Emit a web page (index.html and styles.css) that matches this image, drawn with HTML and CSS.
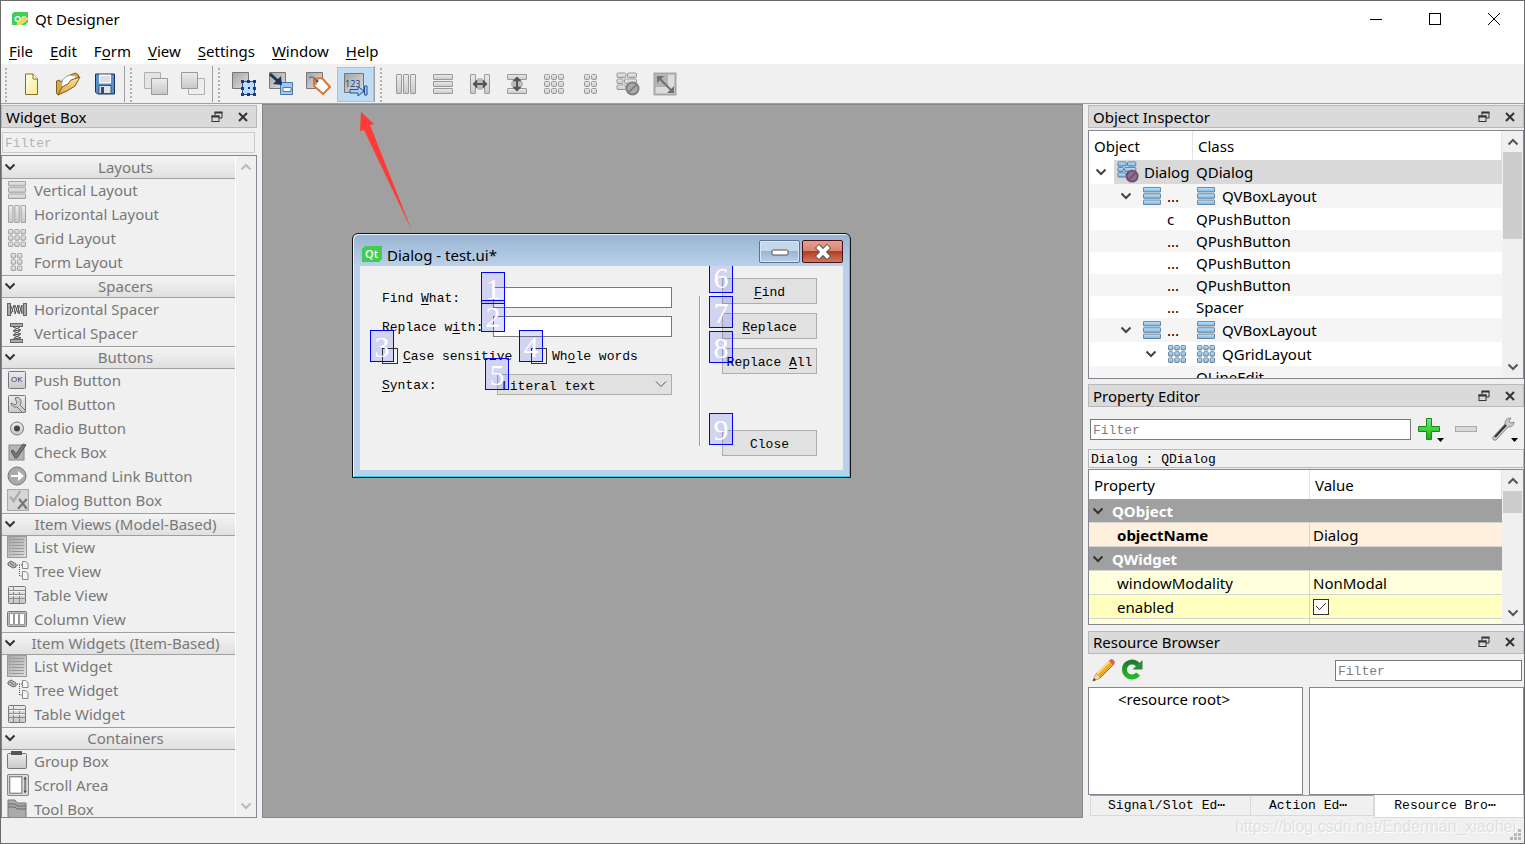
FILE: index.html
```html
<!DOCTYPE html>
<html lang="en">
<head>
  <meta charset="UTF-8" />
  <title>Qt Designer</title>
  <link rel="stylesheet" href="styles.css">
</head>
<body>
  <!-- icon sprite -->
  <svg class="sprite" width="0" height="0" aria-hidden="true">
    <defs>
      <linearGradient id="silver" x1="0" y1="0" x2="0" y2="1"><stop offset="0" stop-color="#ececec"/><stop offset="1" stop-color="#c8c8c8"/></linearGradient>
      <linearGradient id="steel" x1="0" y1="0" x2="1" y2="1"><stop offset="0" stop-color="#a4a4a4"/><stop offset="1" stop-color="#e0e0e0"/></linearGradient>
      <linearGradient id="blue" x1="0" y1="0" x2="0" y2="1"><stop offset="0" stop-color="#c4e6ff"/><stop offset="1" stop-color="#74b4e4"/></linearGradient>
      <linearGradient id="paper" x1="0" y1="0" x2="1" y2="1"><stop offset="0" stop-color="#fffff4"/><stop offset="1" stop-color="#f7ea8c"/></linearGradient>
      <linearGradient id="gold" x1="0" y1="0" x2="0" y2="1"><stop offset="0" stop-color="#fbe6a0"/><stop offset="1" stop-color="#d8a53c"/></linearGradient>
      <linearGradient id="green" x1="0" y1="0" x2="0" y2="1"><stop offset="0" stop-color="#7fe87a"/><stop offset="1" stop-color="#08b808"/></linearGradient>
      <linearGradient id="leaf" x1="0" y1="0" x2="0" y2="1"><stop offset="0" stop-color="#1f7a33"/><stop offset="1" stop-color="#22b822"/></linearGradient>
    </defs>
    <symbol id="vbox" viewBox="0 0 20 20"><rect x=".5" y=".5" width="19" height="5" rx=".5"/><rect x=".5" y="7.500" width="19" height="5" rx=".5"/><rect x=".5" y="14.500" width="19" height="5" rx=".5"/></symbol>
    <symbol id="hbox" viewBox="0 0 20 20"><rect x=".5" y=".5" width="5" height="19" rx=".5"/><rect x="7.500" y=".5" width="5" height="19" rx=".5"/><rect x="14.500" y=".5" width="5" height="19" rx=".5"/></symbol>
    <symbol id="grid" viewBox="0 0 20 20">
      <rect x=".5" y=".5" width="5" height="5" rx="1"/><rect x="7.500" y=".5" width="5" height="5" rx="1"/><rect x="14.500" y=".5" width="5" height="5" rx="1"/>
      <rect x=".5" y="7.500" width="5" height="5" rx="1"/><rect x="7.500" y="7.500" width="5" height="5" rx="1"/><rect x="14.500" y="7.500" width="5" height="5" rx="1"/>
      <rect x=".5" y="14.500" width="5" height="5" rx="1"/><rect x="7.500" y="14.500" width="5" height="5" rx="1"/><rect x="14.500" y="14.500" width="5" height="5" rx="1"/>
    </symbol>
    <symbol id="form" viewBox="0 0 20 20">
      <rect x="3.500" y=".5" width="5" height="5" rx="1"/><rect x="10.500" y=".5" width="5" height="5" rx="1"/>
      <rect x="3.500" y="7.500" width="5" height="5" rx="1"/><rect x="10.500" y="7.500" width="5" height="5" rx="1"/>
      <rect x="3.500" y="14.500" width="5" height="5" rx="1"/><rect x="10.500" y="14.500" width="5" height="5" rx="1"/>
    </symbol>
    <symbol id="hsplit" viewBox="0 0 20 20"><rect x=".5" y=".5" width="5" height="19" rx=".5"/><rect x="14.500" y=".5" width="5" height="19" rx=".5"/><path d="M9 4v12M11 4v12" stroke="#888"/><path d="M5 10h10" stroke="#555" stroke-width="2"/><path d="M2.500 10l5-5v10zM17.500 10l-5-5v10z" fill="#555" stroke="none"/></symbol>
    <symbol id="vsplit" viewBox="0 0 20 20"><rect x=".5" y=".5" width="19" height="5" rx=".5"/><rect x=".5" y="14.500" width="19" height="5" rx=".5"/><path d="M4 9h12M4 11h12" stroke="#888"/><path d="M10 5v10" stroke="#555" stroke-width="2"/><path d="M10 2.500l5 5H5zM10 17.500l5-5H5z" fill="#555" stroke="none"/></symbol>
    <symbol id="break" viewBox="0 0 24 24"><rect x="1" y="1" width="9" height="4.500" rx="1"/><rect x="11.500" y="1" width="9" height="4.500" rx="1"/><rect x="1" y="7" width="6" height="4.500" rx="1"/><rect x="8.500" y="7" width="12" height="4.500" rx="1"/><rect x="1" y="13" width="9" height="4.500" rx="1"/></symbol>
    <symbol id="chev" viewBox="0 0 12 12"><path d="M1.500 3.500L6 8l4.500-4.500" fill="none" stroke="currentColor" stroke-width="2"/></symbol>
    <symbol id="float" viewBox="0 0 12 12"><path d="M4 4V1.500h7v5.500H8" fill="none" stroke="#333"/><path d="M3.500 1.500h8" stroke="#333" stroke-width="2"/><rect x="1" y="5" width="7" height="5.500" fill="none" stroke="#333"/><path d="M.5 5.500h8" stroke="#333" stroke-width="2"/></symbol>
    <symbol id="close" viewBox="0 0 12 12"><path d="M2 2l8 8M10 2l-8 8" stroke="#333" stroke-width="2"/></symbol>
    <symbol id="hspacer" viewBox="0 0 20 20"><rect x=".5" y="4.500" width="3" height="12" fill="#aaa" stroke="#666"/><rect x="16.500" y="4.500" width="3" height="12" fill="#aaa" stroke="#666"/><path d="M4 15l3-9 1 9 3-9 1 9 3-9v9M4 7l2 6M8 6l3 8M12 6l3 8" fill="none" stroke="#555"/></symbol>
    <symbol id="vspacer" viewBox="0 0 20 20"><rect x="3.500" y=".5" width="12" height="3" fill="#aaa" stroke="#666"/><rect x="3.500" y="16.500" width="12" height="3" fill="#aaa" stroke="#666"/><path d="M6 4l8 3-8 1 8 3-8 1 8 3-8 1M13 4l-6 3M13 8l-6 3M13 12l-6 3" fill="none" stroke="#555"/></symbol>
    <symbol id="list" viewBox="0 0 20 22"><rect x=".5" y=".5" width="19" height="21" fill="url(#steel)" stroke="#999"/><path d="M2 3.500h2M2 6.500h2M2 9.500h2M2 12.500h2M2 15.500h2M2 18.500h2M5 3.500h12M5 6.500h12M5 9.500h12M5 12.500h12M5 15.500h12M5 18.500h12" stroke="#999"/></symbol>
    <symbol id="tree" viewBox="0 0 22 22"><path d="M1 3l3-2 5 3v3l-3 1-5-3zM3 3l4 3" fill="#bbb" stroke="#666"/><path d="M10 5h5M12.500 5v11h3" fill="none" stroke="#555" stroke-dasharray="1 1"/><path d="M15.500 1.500h3l2.500 2v5h-5.500zM15.500 11.500h3l2.500 2v6h-5.500z" fill="#f6f6f6" stroke="#888"/></symbol>
    <symbol id="table" viewBox="0 0 20 20"><rect x="1.500" y="1.500" width="17" height="17" rx="1" fill="url(#silver)" stroke="#777"/><path d="M1 5.500h18M1 9.500h18M1 13.500h18M6.500 1v17M12.500 5v13" stroke="#8a8a8a"/><path d="M2 6.500h16M2 10.500h16" stroke="#f4f4f4"/></symbol>
  </svg>

  <header class="title-bar">
    <svg class="app-icon" width="18" height="16" viewBox="0 0 18 16"><path d="M3 1h14v10l-3 3H1V3z" fill="#41cd52"/><text x="3" y="11" font-family="Open Sans, sans-serif" font-size="9" font-weight="bold" fill="#fff">Qt</text><path d="M7 11l7-6 3 3-7 6-4 1z" fill="#f0d848" stroke="#fff" stroke-width=".5"/></svg>
    <h1>Qt Designer</h1>
    <div class="window-buttons">
      <button aria-label="Minimize"><svg width="12" height="12"><path d="M0 6.500h12" stroke="#000"/></svg></button>
      <button aria-label="Maximize"><svg width="12" height="12"><rect x=".5" y=".5" width="11" height="11" fill="none" stroke="#000"/></svg></button>
      <button aria-label="Close"><svg width="12" height="12"><path d="M0 0l12 12M12 0L0 12" stroke="#000"/></svg></button>
    </div>
  </header>

  <nav class="menu-bar">
    <a href="#"><u>F</u>ile</a>
    <a href="#"><u>E</u>dit</a>
    <a href="#">F<u>o</u>rm</a>
    <a href="#"><u>V</u>iew</a>
    <a href="#"><u>S</u>ettings</a>
    <a href="#"><u>W</u>indow</a>
    <a href="#"><u>H</u>elp</a>
  </nav>

  <div class="toolbar">
    <div class="tool-group">
      <button aria-label="New"><svg width="26" height="26" viewBox="0 0 26 26"><path d="M7.500 3H15l4.500 5v15.500h-12z" fill="url(#paper)" stroke="#8a6d1c"/><path d="M15 3v5h4.500" fill="#fff" stroke="#8a6d1c"/></svg></button>
      <button aria-label="Open"><svg width="26" height="26" viewBox="0 0 26 26"><path d="M1.500 10l3-1 1 2 7-6 8-3 3 2v4L13 18 3 24l-1.500-2z" fill="#d9a93c" stroke="#7d5d14"/><path d="M6 15l2-7 6-4 7 1-1 6-9 5z" fill="#fff" stroke="#aaa"/><path d="M3 24l4-8 6-3 3-4 9-3-5 9-8 5z" fill="url(#gold)" stroke="#7d5d14"/></svg></button>
      <button aria-label="Save"><svg width="26" height="26" viewBox="0 0 26 26"><path d="M3.500 3h19v20H5.500l-2-2z" fill="#5a90c8" stroke="#1c3058"/><rect x="7" y="3.500" width="12" height="9" fill="#fafafa"/><path d="M8 6h10M8 8h10M8 10h10" stroke="#b8c4d0"/><rect x="7" y="14.500" width="12" height="8" fill="#dde4ea" stroke="#3a5276"/><rect x="9" y="16" width="3" height="6" fill="#2f4b76"/></svg></button>
    </div>
    <div class="tool-group">
      <button aria-label="Send to Back"><svg width="26" height="26" viewBox="0 0 26 26" fill="url(#silver)" stroke="#b0b0b0"><path d="M1.500 1.500h16v16h-16z" fill="#e4e4e4"/><path d="M8.500 7.500h16v16h-16z" stroke="#999"/></svg></button>
      <button aria-label="Bring to Front"><svg width="26" height="26" viewBox="0 0 26 26" fill="url(#silver)" stroke="#b0b0b0"><path d="M8.500 7.500h16v16h-16z" fill="#eee"/><path d="M1.500 1.500h16v16h-16z" stroke="#999"/></svg></button>
    </div>
    <div class="tool-group">
      <button aria-label="Edit Widgets"><svg width="26" height="26" viewBox="0 0 26 26"><path d="M1.500 1.500h16v16h-16z" fill="url(#steel)" stroke="#777"/><path d="M11.500 10.500h12v13h-12z" fill="#bcdcff" stroke="#2d4f86"/><path d="M10 9h3v3h-3zM16 9h3v3h-3zM22 9h3v3h-3zM10 16h3v3h-3zM22 16h3v3h-3zM10 22h3v3h-3zM16 22h3v3h-3zM22 22h3v3h-3zM17 16h2v2h-2z" fill="#1d3c70"/></svg></button>
      <button aria-label="Edit Signals/Slots"><svg width="26" height="26" viewBox="0 0 26 26"><path d="M1.500 1.500h16v16h-16z" fill="url(#steel)" stroke="#777"/><path d="M12.500 11.500h12v12h-12z" fill="#9ccaff" stroke="#50729c"/><path d="M15 16.500h8v4h-8z" fill="#fff" stroke="#527bb0"/><path d="M2 3l9 8" stroke="#1d3557" stroke-width="3"/><path d="M14 14l-1-9-8 8z" fill="#1d3557"/></svg></button>
      <button aria-label="Edit Buddies"><svg width="26" height="26" viewBox="0 0 26 26"><path d="M1.500 1.500h16v16h-16z" fill="url(#steel)" stroke="#777"/><path d="M9 8l8-1 8 9-7 7-9-8z" fill="#fff" stroke="#e07428" stroke-width="2"/><path d="M4 7q4-3 7 2v5" fill="none" stroke="#555"/><circle cx="12" cy="10" r="1.500" fill="#555"/></svg></button>
      <button class="checked" aria-label="Edit Tab Order"><svg width="26" height="26" viewBox="0 0 26 26"><path d="M2.500 2.500h19v19h-19z" fill="url(#steel)" stroke="#777"/><text x="3" y="16" font-family="Open Sans, sans-serif" font-size="9" fill="#0e3a94">123</text><path d="M8 18.500h8v-3l6 4.500-6 5v-3H8zM22.500 15h2.500v9h-2.500z" fill="#a8d0f4" stroke="#20508e"/></svg></button>
    </div>
    <div class="tool-group">
      <button disabled aria-label="Lay Out Horizontally"><svg width="20" height="20" fill="url(#silver)" stroke="#999"><use href="#hbox"/></svg></button>
      <button disabled aria-label="Lay Out Vertically"><svg width="20" height="20" fill="url(#silver)" stroke="#999"><use href="#vbox"/></svg></button>
      <button disabled aria-label="Lay Out Horizontally in Splitter"><svg width="20" height="20" fill="url(#silver)" stroke="#999"><use href="#hsplit"/></svg></button>
      <button disabled aria-label="Lay Out Vertically in Splitter"><svg width="20" height="20" fill="url(#silver)" stroke="#999"><use href="#vsplit"/></svg></button>
      <button disabled aria-label="Lay Out in a Grid"><svg width="20" height="20" fill="url(#silver)" stroke="#999"><use href="#grid"/></svg></button>
      <button disabled aria-label="Lay Out in a Form Layout"><svg width="20" height="20" fill="url(#silver)" stroke="#999"><use href="#form"/></svg></button>
      <button disabled aria-label="Break Layout"><svg width="24" height="24" viewBox="0 0 24 24" fill="url(#silver)" stroke="#999"><use href="#break"/><circle cx="16.500" cy="16.500" r="6" fill="#aaa" stroke="#808080" stroke-width="2"/><path d="M13 20l7-7" stroke="#808080" stroke-width="2"/></svg></button>
      <button disabled aria-label="Adjust Size"><svg width="24" height="24" viewBox="0 0 24 24"><path d="M1.500 1.500h21v21h-21z" fill="#dcdcdc" stroke="#a8a8a8" stroke-width="2"/><path d="M2 2h13v13H2z" fill="#b4b4b4"/><path d="M6 6l13 13" stroke="#707070" stroke-width="2"/><path d="M4 4h7l-7 7zM21 21h-7l7-7z" fill="#707070"/></svg></button>
    </div>
  </div>

  <main class="workspace">
    <aside class="dock widget-dock">
      <div class="dock-title">
        <h2>Widget Box</h2>
        <button aria-label="Float"><svg width="12" height="12"><use href="#float"/></svg></button>
        <button aria-label="Close"><svg width="12" height="12"><use href="#close"/></svg></button>
      </div>
      <input class="filter widget-filter" type="text" placeholder="Filter" aria-label="Filter widgets" disabled>
      <div class="view widget-box">
        <div class="widget-list">
          <h3><svg width="12" height="12"><use href="#chev"/></svg><span>Layouts</span></h3>
          <ul>
            <li><svg class="box" width="18" height="18" fill="url(#silver)" stroke="#999"><use href="#vbox"/></svg>Vertical Layout</li>
            <li><svg class="box" width="18" height="18" fill="url(#silver)" stroke="#999"><use href="#hbox"/></svg>Horizontal Layout</li>
            <li><svg class="box" width="18" height="18" fill="url(#silver)" stroke="#999"><use href="#grid"/></svg>Grid Layout</li>
            <li><svg class="box" width="18" height="18" fill="url(#silver)" stroke="#999"><use href="#form"/></svg>Form Layout</li>
          </ul>
          <h3><svg width="12" height="12"><use href="#chev"/></svg><span>Spacers</span></h3>
          <ul>
            <li><svg width="20" height="20"><use href="#hspacer"/></svg>Horizontal Spacer</li>
            <li><svg width="20" height="20"><use href="#vspacer"/></svg>Vertical Spacer</li>
          </ul>
          <h3><svg width="12" height="12"><use href="#chev"/></svg><span>Buttons</span></h3>
          <ul>
            <li><svg width="20" height="20"><rect x="1.500" y="1.500" width="17" height="17" rx="1" fill="url(#silver)" stroke="#777"/><text x="4" y="12" font-family="Open Sans, sans-serif" font-size="8" fill="#333">OK</text></svg>Push Button</li>
            <li><svg width="20" height="20"><rect x="1.500" y="1.500" width="17" height="17" rx="1" fill="url(#silver)" stroke="#777"/><path d="M8 4q5-2 6 3 0 3-1 4l6 6-3 2-6-6q-5 1-6-4l4 2 2-2z" fill="#ccc" stroke="#777"/></svg>Tool Button</li>
            <li><svg width="20" height="20"><circle cx="10" cy="10.500" r="6.500" fill="url(#silver)" stroke="#777"/><circle cx="10" cy="10.500" r="3" fill="#444"/></svg>Radio Button</li>
            <li><svg width="20" height="20"><rect x="2" y="3" width="15" height="15" fill="#b4b4b4" stroke="#888"/><path d="M4 9l2-1 3 4 7-10 3 1-9 13H8z" fill="#777" stroke="#555"/></svg>Check Box</li>
            <li><svg width="20" height="20"><circle cx="10" cy="10" r="9" fill="#aaa" stroke="#777"/><path d="M4 9h7V5l6 5-6 5v-4H4z" fill="#fff"/></svg>Command Link Button</li>
            <li><svg width="22" height="22" viewBox="0 0 20 20"><rect x=".5" y=".5" width="19" height="19" fill="#d6d6d6" stroke="#aaa"/><path d="M3 7l3 4 6-9" fill="none" stroke="#aaa" stroke-width="2"/><path d="M11 9l7 9M18 9l-8 9" stroke="#777" stroke-width="2"/></svg>Dialog Button Box</li>
          </ul>
          <h3><svg width="12" height="12"><use href="#chev"/></svg><span>Item Views (Model-Based)</span></h3>
          <ul>
            <li><svg width="20" height="22"><use href="#list"/></svg>List View</li>
            <li><svg width="22" height="22"><use href="#tree"/></svg>Tree View</li>
            <li><svg width="20" height="20"><use href="#table"/></svg>Table View</li>
            <li><svg width="20" height="20"><rect x=".5" y="2.500" width="19" height="15" rx="1" fill="#bbb" stroke="#777"/><path d="M2.500 4.500h4v11h-4zM7.500 4.500h4v11h-4zM12.500 4.500h5v11h-5z" fill="#fff" stroke="#999"/></svg>Column View</li>
          </ul>
          <h3><svg width="12" height="12"><use href="#chev"/></svg><span>Item Widgets (Item-Based)</span></h3>
          <ul>
            <li><svg width="20" height="22"><use href="#list"/></svg>List Widget</li>
            <li><svg width="22" height="22"><use href="#tree"/></svg>Tree Widget</li>
            <li><svg width="20" height="20"><use href="#table"/></svg>Table Widget</li>
          </ul>
          <h3><svg width="12" height="12"><use href="#chev"/></svg><span>Containers</span></h3>
          <ul>
            <li><svg width="20" height="20"><rect x=".5" y="2.500" width="19" height="15" rx="1" fill="url(#silver)" stroke="#777"/><path d="M4 0h11v4H4z" fill="#555"/></svg>Group Box</li>
            <li><svg width="22" height="22" viewBox="0 0 20 20"><rect x=".5" y=".5" width="19" height="19" rx="1" fill="#ddd" stroke="#888"/><rect x="2.500" y="2.500" width="11" height="15" fill="#fff" stroke="#777"/><path d="M16.500 5v10" stroke="#888" stroke-width="2"/><path d="M15 5l1.500-3L18 5zM15 15l1.500 3 1.500-3z" fill="#444"/></svg>Scroll Area</li>
            <li><svg width="20" height="20"><path d="M1 1h7l2 3h9v16H1z" fill="#aaa" stroke="#777"/><path d="M1 5h7l2 2h9M1 8h7l2 2h9" fill="none" stroke="#666"/></svg>Tool Box</li>
          </ul>
        </div>
        <div class="scrollbar off">
          <svg class="up" width="12" height="12"><use href="#chev"/></svg>
          <svg width="12" height="12"><use href="#chev"/></svg>
        </div>
      </div>
    </aside>

    <section class="mdi">
      <div class="dialog">
        <div class="dialog-title">
          <svg width="20" height="16"><path d="M3 0h17v13l-3 3H0V3z" fill="#41cd52"/><text x="3" y="12" font-family="Open Sans, sans-serif" font-size="11" font-weight="600" fill="#fff">Qt</text></svg>
          <span>Dialog - test.ui*</span>
          <button class="min" aria-label="Minimize"><svg width="18" height="8"><rect x="1" y="2" width="16" height="5" rx="1" fill="#fff" stroke="#555"/></svg></button>
          <button class="shut" aria-label="Close"><svg width="18" height="16"><path d="M3 2l12 12M15 2L3 14" stroke="#555" stroke-width="6"/><path d="M3.500 2.500l11 11M14.500 2.500l-11 11" stroke="#fff" stroke-width="4"/></svg></button>
        </div>
        <form class="dialog-body">
          <div class="find-form">
            <div class="row"><label for="find">Find <u>W</u>hat:</label><input type="text" id="find"></div>
            <div class="row"><label for="replace">Replace w<u>i</u>th:</label><input type="text" id="replace"></div>
            <div class="checks">
              <label><input type="checkbox"> <span><u>C</u>ase sensitive</span></label>
              <label><input type="checkbox"> <span>Wh<u>o</u>le words</span></label>
            </div>
            <div class="row syntax">
              <label for="syntax"><u>S</u>yntax:</label>
              <div class="combo">
                <select id="syntax"><option>Literal text</option></select>
                <svg width="12" height="12"><path d="M1 3.500l5 5 5-5" fill="none" stroke="#555"/></svg>
              </div>
            </div>
          </div>
          <div class="divider"></div>
          <div class="form-buttons">
            <button type="button"><u>F</u>ind</button>
            <button type="button"><u>R</u>eplace</button>
            <button type="button">Replace <u>A</u>ll</button>
            <button type="button" class="last">Close</button>
          </div>
          <!-- tab order indicators -->
          <span class="tab-order t1">1</span>
          <span class="tab-order t2">2</span>
          <span class="tab-order t3">3</span>
          <span class="tab-order t4">4</span>
          <span class="tab-order t5">5</span>
          <span class="tab-order t6">6</span>
          <span class="tab-order t7">7</span>
          <span class="tab-order t8">8</span>
          <span class="tab-order t9">9</span>
        </form>
      </div>
      <svg class="pointer" width="54" height="120"><path d="M2 0l13 12-4 1 42 106L5 18l-4 1z" fill="#ff3b38"/></svg>
    </section>

    <aside class="dock right-docks">
      <section class="panel">
        <div class="dock-title">
          <h2>Object Inspector</h2>
          <button aria-label="Float"><svg width="12" height="12"><use href="#float"/></svg></button>
          <button aria-label="Close"><svg width="12" height="12"><use href="#close"/></svg></button>
        </div>
        <div class="view inspector">
          <div class="table-wrap">
            <table class="object-tree">
              <thead><tr><th>Object</th><th>Class</th></tr></thead>
              <tbody>
                <tr class="tall selected"><td><div><i><svg width="12" height="12"><use href="#chev"/></svg></i><b><svg width="22" height="22" viewBox="0 0 24 24" fill="url(#blue)" stroke="#4c78a4"><use href="#break"/><circle cx="16.500" cy="16.500" r="6" fill="#6f7ca0" stroke="#744c68" stroke-width="2"/><path d="M13 20l7-7" stroke="#a04058" stroke-width="2"/></svg>Dialog</b></div></td><td>QDialog</td></tr>
                <tr class="tall"><td><div class="l1"><i><svg width="12" height="12"><use href="#chev"/></svg></i><b><svg class="box" width="18" height="18" fill="url(#blue)" stroke="#60788f"><use href="#vbox"/></svg>...</b></div></td><td><div><svg class="box" width="18" height="18" fill="url(#blue)" stroke="#60788f"><use href="#vbox"/></svg>QVBoxLayout</div></td></tr>
                <tr><td><div class="l3">c</div></td><td>QPushButton</td></tr>
                <tr><td><div class="l3">...</div></td><td>QPushButton</td></tr>
                <tr><td><div class="l3">...</div></td><td>QPushButton</td></tr>
                <tr><td><div class="l3">...</div></td><td>QPushButton</td></tr>
                <tr><td><div class="l3">...</div></td><td>Spacer</td></tr>
                <tr class="tall"><td><div class="l1"><i><svg width="12" height="12"><use href="#chev"/></svg></i><b><svg class="box" width="18" height="18" fill="url(#blue)" stroke="#60788f"><use href="#vbox"/></svg>...</b></div></td><td><div><svg class="box" width="18" height="18" fill="url(#blue)" stroke="#60788f"><use href="#vbox"/></svg>QVBoxLayout</div></td></tr>
                <tr class="tall"><td><div class="l2"><i><svg width="12" height="12"><use href="#chev"/></svg></i><b><svg class="box" width="18" height="18" fill="url(#blue)" stroke="#60788f"><use href="#grid"/></svg></b></div></td><td><div><svg class="box" width="18" height="18" fill="url(#blue)" stroke="#60788f"><use href="#grid"/></svg>QGridLayout</div></td></tr>
                <tr><td></td><td>QLineEdit</td></tr>
              </tbody>
            </table>
          </div>
          <div class="scrollbar">
            <svg class="up" width="12" height="12"><use href="#chev"/></svg>
            <div class="thumb"></div>
            <svg width="12" height="12"><use href="#chev"/></svg>
          </div>
        </div>
      </section>

      <section class="panel">
        <div class="dock-title">
          <h2>Property Editor</h2>
          <button aria-label="Float"><svg width="12" height="12"><use href="#float"/></svg></button>
          <button aria-label="Close"><svg width="12" height="12"><use href="#close"/></svg></button>
        </div>
        <div class="prop-tools">
          <input class="filter" type="text" placeholder="Filter" aria-label="Filter properties">
          <button aria-label="Add"><svg width="28" height="28"><path d="M9.500 3.500h5v8h8v5h-8v8h-5v-8h-8v-5h8z" fill="url(#green)" stroke="#14881c"/><path d="M20 23h7l-3.500 4z"/></svg></button>
          <button aria-label="Remove" disabled><svg width="28" height="28"><rect x="1.500" y="11.500" width="21" height="5" fill="#d8d8d8" stroke="#aaa"/></svg></button>
          <button aria-label="Configure"><svg width="28" height="28"><path d="M1.500 22.500L14 9q0-6 6-6l-2 3 2 2 3-1q0 5-6 5L5 25q-3 1-3.500-2.500z" fill="#ccc" stroke="#888"/><path d="M4 22L15 10" stroke="#333" stroke-width="2"/><path d="M20 23h7l-3.500 4z"/></svg></button>
        </div>
        <div class="object-label">Dialog : QDialog</div>
        <div class="view properties">
          <div class="table-wrap">
            <table class="prop-table">
              <thead><tr><th>Property</th><th>Value</th></tr></thead>
              <tbody>
                <tr class="group"><td colspan="2"><svg width="12" height="12"><use href="#chev"/></svg>QObject</td></tr>
                <tr class="name"><td>objectName</td><td>Dialog</td></tr>
                <tr class="group"><td colspan="2"><svg width="12" height="12"><use href="#chev"/></svg>QWidget</td></tr>
                <tr class="light"><td>windowModality</td><td>NonModal</td></tr>
                <tr class="deep"><td><label for="enabled">enabled</label></td><td><input type="checkbox" id="enabled" checked></td></tr>
                <tr class="light"><td></td><td></td></tr>
              </tbody>
            </table>
          </div>
          <div class="scrollbar">
            <svg class="up" width="12" height="12"><use href="#chev"/></svg>
            <div class="thumb"></div>
            <svg width="12" height="12"><use href="#chev"/></svg>
          </div>
        </div>
      </section>

      <section class="panel">
        <div class="dock-title">
          <h2>Resource Browser</h2>
          <button aria-label="Float"><svg width="12" height="12"><use href="#float"/></svg></button>
          <button aria-label="Close"><svg width="12" height="12"><use href="#close"/></svg></button>
        </div>
        <div class="resource-tools">
          <button aria-label="Edit Resources"><svg width="24" height="24"><path d="M1 23l3-7L18 2l4 4L8 20z" fill="#f0a828" stroke="#a86c14"/><path d="M5 16L18 3" stroke="#ffdc80" stroke-width="2"/><path d="M1 23l3-7 4 4z" fill="#f4dcb0"/><path d="M1 23l1-3 2 2z" fill="#333"/><path d="M17 3l2-2q3 0 4 4l-2 2z" fill="#d46848"/></svg></button>
          <button aria-label="Reload"><svg width="24" height="24"><path d="M17 16a7.500 7.500 0 1 1 0-9" fill="none" stroke="url(#leaf)" stroke-width="5"/><path d="M21.500 2v9.500h-10z" fill="#2a8c3c"/></svg></button>
          <input class="filter" type="text" placeholder="Filter" aria-label="Filter resources">
        </div>
        <div class="panes">
          <div class="view pane">&lt;resource root&gt;</div>
          <div class="view pane"></div>
        </div>
        <div class="tabs">
          <button>Signal/Slot Ed⋯</button>
          <button>Action Ed⋯</button>
          <button class="active">Resource Bro⋯</button>
        </div>
      </section>
    </aside>
  </main>

  <footer class="status-bar">
    <span>https://blog.csdn.net/Enderman_xiaohei</span>
    <svg class="grip" width="12" height="12"><path d="M8 0h3v3H8zM8 4h3v3H8zM4 4h3v3H4zM8 8h3v3H8zM4 8h3v3H4zM0 8h3v3H0z" fill="#b8b8b8"/></svg>
  </footer>
</body>
</html>
```

FILE: styles.css
```css
* {
  box-sizing: border-box;
}
html, body {
  height: 100%;
  margin: 0;
}
body {
  display: flex;
  flex-direction: column;
  border: 1px solid #6b6b6e;
  background: #f0f0f0;
  color: #000;
  font-family: "Noto Sans", "Open Sans", sans-serif;
  font-size: 15px;
  line-height: 20px;
  overflow: hidden;
}
h1, h2, h3, ul {
  margin: 0;
  padding: 0;
  font-size: 15px;
  font-weight: 400;
}
button, input, select {
  margin: 0;
  padding: 0;
  font: inherit;
  color: inherit;
  border: 0;
  border-radius: 0;
  background: none;
}
svg {
  display: block;
  flex: none;
}
.box {
  margin: 0 1px;
}
u {
  text-underline-offset: 2px;
}
.sprite {
  position: absolute;
}

/* title and menu */
.title-bar {
  display: flex;
  align-items: center;
  height: 37px;
  padding: 0 1px 2px 10px;
  background: #fff;
}
.title-bar h1 {
  flex: 1;
  margin-left: 6px;
}
.window-buttons {
  display: flex;
}
.window-buttons button {
  display: flex;
  justify-content: center;
  width: 59px;
}
.menu-bar {
  display: flex;
  gap: 17px;
  height: 26px;
  padding: 3px 8px;
  background: #fff;
}
.menu-bar a {
  color: #000;
  text-decoration: none;
}

/* toolbar */
.toolbar {
  display: flex;
  height: 40px;
  padding: 2px 0 1px;
  border-bottom: 1px solid #a0a0a0;
}
.tool-group {
  display: flex;
  align-items: center;
  padding-left: 12px;
  background: radial-gradient(circle, #b0b0b0 1px, transparent 1px) 3px 1px / 4px 4px repeat-y;
}
.tool-group:not(:last-child) {
  border-right: 1px solid #a0a0a0;
  margin-right: 1px;
}
.tool-group button {
  display: flex;
  align-items: center;
  justify-content: center;
  width: 37px;
  height: 35px;
  padding-right: 1px;
}
.tool-group .checked {
  background: #c0dcf3;
  border: 1px solid #90c8f6;
}

/* docks */
.workspace {
  flex: 1;
  min-height: 0;
  display: grid;
  grid-template-columns: 261px minmax(0, 1fr) 441px;
}
.dock {
  min-height: 0;
  padding-top: 1px;
}
.widget-dock {
  display: flex;
  flex-direction: column;
  padding-right: 5px;
}
.dock-title {
  display: flex;
  align-items: center;
  gap: 14px;
  height: 23px;
  padding: 0 7px 0 4px;
  border: 1px solid #b9b9b9;
  background: #dadada;
}
.dock-title h2 {
  flex: 1;
}
.filter {
  height: 21px;
  padding: 2px 2px 0;
  border: 1px solid #7a7a7a;
  background: #fff;
  font-family: "Liberation Mono", monospace;
  font-size: 13px;
}
.filter::placeholder {
  color: #808080;
}
.widget-filter {
  margin: 4px 2px 2px 1px;
  border-color: #ccc;
  background: #f0f0f0;
}
.widget-filter::placeholder {
  color: #b4b4b4;
}
.view {
  border: 1px solid #828790;
  background: #fff;
  overflow: hidden;
}
.widget-box {
  flex: 1;
  min-height: 0;
  display: flex;
  background: #f0f0f0;
  color: #787878;
}
.widget-list {
  flex: 1;
}
.widget-list h3 {
  display: flex;
  align-items: center;
  height: 23px;
  padding: 0 0 2px 2px;
  border-top: 1px solid #a0a0a0;
  border-bottom: 1px solid #a0a0a0;
  background: linear-gradient(#f4f4f4, #e0e0e0);
}
.widget-list h3:first-child {
  border-top-color: #f0f0f0;
}
.widget-list h3 svg {
  color: #333;
}
.widget-list h3 span {
  flex: 1;
  text-align: center;
  white-space: nowrap;
}
.widget-list li {
  display: grid;
  grid-template-columns: 27px 1fr;
  align-items: center;
  height: 24px;
  padding: 0 0 2px 5px;
}
.scrollbar {
  flex: none;
  width: 21px;
  display: flex;
  flex-direction: column;
  align-items: center;
  padding: 5px 0;
  background: #f0f0f0;
  color: #555;
}
.scrollbar .up {
  transform: rotate(180deg);
}
.scrollbar svg:last-child {
  margin-top: auto;
}
.scrollbar.off {
  border-left: 1px solid #fff;
  color: #bbb;
}
.thumb {
  width: 19px;
  margin-top: 4px;
  background: #cdcdcd;
}
.inspector .thumb {
  height: 87px;
}
.properties .thumb {
  height: 22px;
}

/* form window */
.mdi {
  position: relative;
  border: 1px solid #828790;
  background: #a0a0a0;
  overflow: hidden;
}
.dialog {
  position: absolute;
  left: 89px;
  top: 128px;
  width: 499px;
  padding: 0 7px 7px;
  border: 1px solid #111;
  border-radius: 6px 6px 0 0;
  background: linear-gradient(#99b4d1, #b9d1ea 32px);
  box-shadow: inset 1px 1px 0 #e8f2fc, inset -1px -1px 0 #30d0e8;
  font-family: "Liberation Mono", monospace;
  font-size: 13px;
}
.dialog-title {
  display: flex;
  align-items: center;
  height: 32px;
  padding: 0 0 0 2px;
  font-family: "Noto Sans", "Open Sans", sans-serif;
  font-size: 15px;
}
.dialog-title span {
  flex: 1;
  padding: 10px 0 0 5px;
}
.dialog-title svg {
  margin-top: 7px;
}
.dialog-title button {
  display: flex;
  align-items: center;
  justify-content: center;
  width: 41px;
  height: 23px;
  margin: 3px 0 0 2px;
  border: 1px solid #5b7390;
  border-radius: 2px;
}
.dialog-title button svg {
  margin: 0;
}
.dialog-title .min {
  background: linear-gradient(#c4d8ec 48%, #9ab6d4 50%, #b8d0e8);
  box-shadow: inset 0 0 0 1px #d8e6f4;
}
.dialog-title .shut {
  border-color: #4c1018;
  background: linear-gradient(#e4a090, #d88470 48%, #b43c24 50%, #d07860);
}
.dialog-body {
  position: relative;
  display: flex;
  height: 204px;
  padding: 12px 26px 14px 22px;
  background: #f0f0f0;
  overflow: hidden;
}
.find-form {
  flex: 1;
  display: flex;
  flex-direction: column;
  gap: 8px;
  padding-top: 9px;
}
.row {
  display: grid;
  grid-template-columns: 111px 1fr;
  align-items: center;
  height: 21px;
  white-space: nowrap;
}
.row.syntax {
  grid-template-columns: 115px 1fr;
}
.row label, .checks span {
  padding-top: 3px;
  line-height: 18px;
}
.row input {
  height: 21px;
  min-width: 0;
  border: 1px solid #7a7a7a;
  background: #fff;
}
.checks {
  display: grid;
  grid-template-columns: 149px 1fr;
  height: 21px;
}
.checks label {
  display: flex;
  align-items: center;
  gap: 5px;
  white-space: nowrap;
}
input[type="checkbox"] {
  appearance: none;
  flex: none;
  width: 16px;
  height: 16px;
  border: 1px solid #333;
  background: #fff;
}
.checks input {
  background: #f0f0f0;
}
.combo {
  position: relative;
}
.combo select {
  appearance: none;
  display: block;
  width: 100%;
  height: 21px;
  padding: 2px 0 0 4px;
  border: 1px solid #adadad;
  background: #e1e1e1;
}
.combo svg {
  position: absolute;
  right: 5px;
  top: 4px;
}
.divider {
  width: 2px;
  margin: 18px 21px 10px 27px;
  border-left: 1px solid #a0a0a0;
  background: #fff;
}
.form-buttons {
  width: 95px;
  display: flex;
  flex-direction: column;
  gap: 9px;
}
.form-buttons button {
  height: 26px;
  padding-top: 3px;
  border: 1px solid #adadad;
  background: #e1e1e1;
  white-space: nowrap;
}
.form-buttons .last {
  margin-top: auto;
}
.tab-order {
  position: absolute;
  width: 24px;
  height: 32px;
  border: 1px solid #0000ff;
  background: rgba(0, 0, 255, 0.12);
  color: #fff;
  font-family: "Liberation Serif", serif;
  font-size: 30px;
  line-height: 31px;
  text-align: center;
}
.t1 { left: 121px; top: 6px; }
.t2 { left: 121px; top: 34px; }
.t3 { left: 10px; top: 64px; }
.t4 { left: 159px; top: 64px; }
.t5 { left: 125px; top: 92px; }
.t6 { left: 349px; top: -5px; }
.t7 { left: 349px; top: 30px; }
.t8 { left: 349px; top: 65px; }
.t9 { left: 349px; top: 147px; }
.pointer {
  position: absolute;
  left: 96px;
  top: 7px;
}

/* right side */
.right-docks {
  display: grid;
  grid-template-rows: minmax(0, 274fr) minmax(0, 241fr) minmax(0, 187fr);
  gap: 5px;
  padding-left: 5px;
}
.panel {
  display: flex;
  flex-direction: column;
  min-height: 0;
}
.inspector, .properties {
  flex: 1;
  min-height: 0;
  display: flex;
}
.inspector {
  margin-top: 2px;
}
.table-wrap {
  flex: 1;
  min-width: 0;
  overflow: hidden;
}
table {
  width: 100%;
  table-layout: fixed;
  border-spacing: 0;
}
th, td {
  padding: 0 0 0 3px;
  text-align: left;
  font-weight: 400;
  white-space: nowrap;
}
th {
  height: 29px;
  padding-left: 5px;
  border-right: 1px solid #e5e5e5;
}
.object-tree th:first-child {
  width: 104px;
}
.object-tree td {
  height: 22px;
}
.object-tree td:first-child {
  padding: 0;
}
.object-tree tr.tall td {
  height: 24px;
}
.object-tree tbody tr:nth-child(even) {
  background: #f5f5f5;
}
.object-tree div {
  display: flex;
  align-items: center;
  gap: 6px;
}
.object-tree td:first-child div {
  gap: 0;
}
.object-tree i {
  width: 25px;
  padding-left: 6px;
  color: #444;
}
.object-tree b {
  flex: 1;
  display: flex;
  align-items: center;
  gap: 5px;
  height: 24px;
  padding-left: 3px;
  font-weight: 400;
}
.object-tree .l1 {
  padding-left: 25px;
}
.object-tree .l2 {
  padding-left: 50px;
}
.object-tree .l3 {
  padding-left: 78px;
}
.object-tree .selected b, .object-tree .selected td:last-child {
  background: #d9d9d9;
}
.prop-tools {
  display: flex;
  align-items: center;
  height: 42px;
  padding: 2px 5px 0 2px;
}
.prop-tools .filter {
  flex: 1;
  min-width: 0;
  margin-right: 6px;
}
.prop-tools button + button {
  margin-left: 9px;
}
.object-label {
  height: 19px;
  padding-left: 2px;
  border: 1px solid #b9b9b9;
  font-family: "Liberation Mono", monospace;
  font-size: 13px;
}
.properties {
  margin: 1px 0;
}
.prop-table th:first-child {
  width: 221px;
}
.prop-table td {
  height: 24px;
  border-bottom: 1px solid #d4d4d4;
}
.prop-table td:first-child {
  padding-left: 28px;
  border-right: 1px solid #d4d4d4;
}
.prop-table .group td {
  padding-left: 3px;
  border-right: 0;
  background: #a0a0a0;
  color: #fff;
  font-weight: 700;
}
.group svg {
  display: inline-block;
  margin-right: 8px;
  color: #333;
}
.name {
  background: #ffefdd;
}
.name td:first-child {
  font-weight: 700;
}
.light {
  background: #ffffdc;
}
.deep {
  background: #ffffbf;
}
.prop-table input {
  display: block;
}
.prop-table input:checked {
  background: linear-gradient(45deg, transparent 42%, #333 42%, #333 58%, transparent 58%) 2px 6px / 4px 4px no-repeat, linear-gradient(-45deg, transparent 44%, #333 44%, #333 56%, transparent 56%) 5px 3px / 7px 7px no-repeat, #fff;
}
.resource-tools {
  display: flex;
  align-items: center;
  gap: 5px;
  height: 33px;
  padding: 0 2px 0 4px;
}
.resource-tools .filter {
  width: 187px;
  margin-left: auto;
}
.panes {
  flex: 1;
  min-height: 0;
  display: grid;
  grid-template-columns: 1fr 1fr;
  gap: 6px;
}
.pane {
  padding: 1px 0 0 29px;
}
.tabs {
  display: flex;
  height: 23px;
  padding-left: 2px;
  font-family: "Liberation Mono", monospace;
  font-size: 13px;
}
.tabs button {
  flex: 162;
  height: 21px;
  padding: 0 8px 0 0;
  border: 1px solid #d9d9d9;
  border-top-color: #a0a0a0;
  white-space: nowrap;
}
.tabs button:nth-child(2) {
  flex: 122;
  border-left: 0;
}
.tabs .active {
  flex: 150;
  height: 23px;
  border-top: 0;
  background: #fff;
}

/* status bar */
.status-bar {
  flex: none;
  display: flex;
  align-items: center;
  justify-content: flex-end;
  height: 25px;
  padding-bottom: 8px;
  color: #e0e0e0;
  font-family: "Liberation Sans", sans-serif;
  font-size: 16px;
  text-shadow: 1px 1px 0 #fff;
}
.grip {
  align-self: flex-end;
  margin-bottom: -6px;
  margin-left: -6px;
  margin-right: 2px;
}
```
